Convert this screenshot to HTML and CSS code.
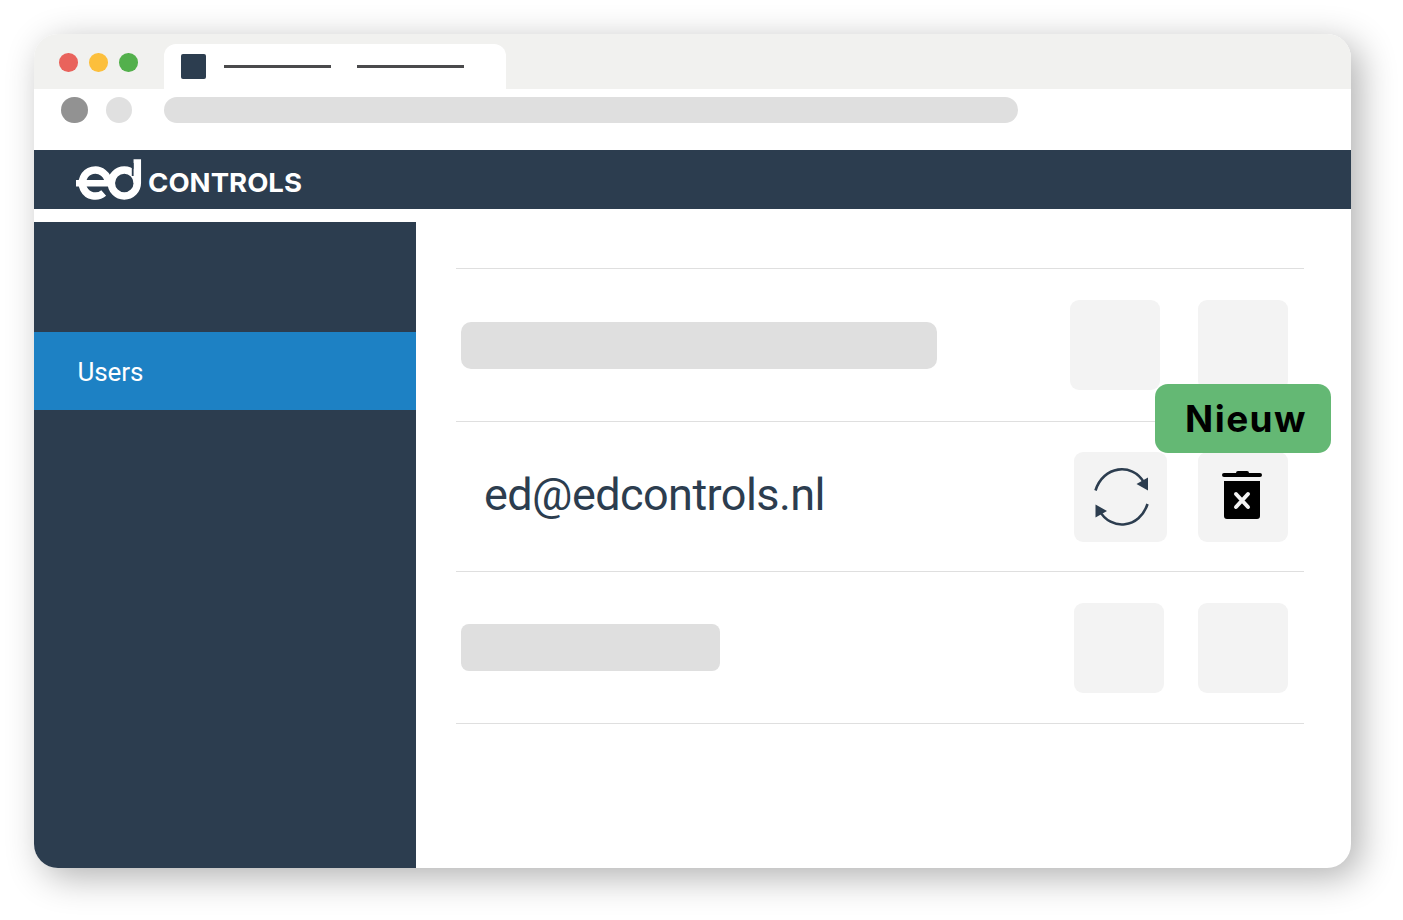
FILE: index.html
```html
<!DOCTYPE html>
<html lang="nl">
<head>
  <meta charset="UTF-8" />
  <meta name="viewport" content="width=device-width, initial-scale=1.0" />
  <title>Ed Controls - Users</title>
  <link rel="stylesheet" href="styles.css">
</head>
<body>
  <div class="browser">
    <div class="tab-bar">
      <div class="window-buttons">
        <span class="dot red"></span>
        <span class="dot yellow"></span>
        <span class="dot green"></span>
      </div>
      <div class="tab">
        <span class="favicon"></span>
        <span class="tab-line"></span>
        <span class="tab-line"></span>
      </div>
    </div>

    <div class="address-bar">
      <span class="nav-dot dark"></span>
      <span class="nav-dot"></span>
      <span class="url"></span>
    </div>

    <header class="app-header">
      <svg class="logo" width="230" height="44" viewBox="0 0 230 44">
        <g fill="none" stroke="#fff" stroke-width="7.500">
          <path d="M0 25.300H35" stroke-width="6.500" />
          <path d="M32.300 25A13 13 0 1 0 27.700 35" />
          <circle cx="48.300" cy="25" r="13" />
          <path d="M61.300 25V1.300" />
          <path d="M56.700 5V18" stroke="#2c3d4f" stroke-width="1.800" />
        </g>
        <text class="logo-text" x="72" y="34" textLength="154" lengthAdjust="spacingAndGlyphs">CONTROLS</text>
      </svg>
    </header>

    <div class="app-body">
      <nav class="sidebar">
        <a class="nav-item">Users</a>
      </nav>

      <main class="content">
        <div class="row row-first">
          <span class="placeholder wide"></span>
          <span class="tile"></span>
          <span class="tile"></span>
        </div>
        <div class="row row-user">
          <span class="email">ed@edcontrols.nl</span>
          <span class="tile tile-refresh">
            <svg width="56" height="60" viewBox="0 0 56 60">
              <g fill="none" stroke="#2c3d4f" stroke-width="2.600">
                <path d="M2.500 23.500C10 -1 39 -5 51 15.500" />
                <path d="M54.500 37C47 61 18 65 6 43" />
              </g>
              <path d="M43.500 17L55 10.500V23.500ZM2.500 37.500V50.500L14 44Z" fill="#2c3d4f" />
            </svg>
          </span>
          <span class="tile tile-delete">
            <svg width="40" height="48" viewBox="0 0 40 48">
              <path d="M2 2H14Q14 0 16 0H25Q27 0 27 2H38Q40 2 40 4T38 6H2Q0 6 0 4T2 2ZM2 10H38V45Q38 48 35 48H5Q2 48 2 45Z" />
              <path d="M14 23L26 36M26 23L14 36" stroke="#f3f3f3" stroke-width="4" stroke-linecap="round" />
            </svg>
          </span>
          <span class="badge">Nieuw</span>
        </div>
        <div class="row row-last">
          <span class="placeholder"></span>
          <span class="tile"></span>
          <span class="tile"></span>
        </div>
      </main>
    </div>
  </div>
</body>
</html>
```
FILE: styles.css
```css
* {
  box-sizing: border-box;
}

body {
  margin: 0;
  padding: 34px;
  height: 920px;
  background: #fff;
  font-family: Roboto, sans-serif;
  overflow: hidden;
}

.browser {
  display: flex;
  flex-direction: column;
  width: 1317px;
  height: 834px;
  background: #fff;
  border-radius: 24px;
  box-shadow: 9px 9px 36px rgba(0, 0, 0, 0.31);
  overflow: hidden;
}

/* browser chrome */
.tab-bar {
  display: flex;
  height: 55px;
  padding-top: 10px;
  background: #f1f1ef;
}

.window-buttons {
  display: flex;
  gap: 11.600px;
  width: 130px;
  padding: 9px 0 0 25px;
}

.dot {
  width: 18.600px;
  height: 18.600px;
  border-radius: 50%;
}

.red { background: #e9635c; }
.yellow { background: #fcbf3c; }
.green { background: #53b04c; }

.tab {
  display: flex;
  align-items: center;
  width: 342px;
  padding-left: 17px;
  background: #fff;
  border-radius: 12px 12px 0 0;
}

.favicon {
  width: 25px;
  height: 25px;
  margin-right: -8px;
  background: #2c3d4f;
  border-radius: 2px;
}

.tab-line {
  width: 106.500px;
  height: 2.500px;
  margin-left: 26.300px;
  background: #4a4a4c;
}

.address-bar {
  display: flex;
  gap: 18px;
  height: 61px;
  padding: 7.500px 0 0 27px;
}

.nav-dot {
  width: 26.500px;
  height: 26.500px;
  background: #e0e0e0;
  border-radius: 50%;
}

.nav-dot.dark {
  background: #929292;
}

.url {
  width: 854px;
  height: 26.500px;
  margin-left: 14px;
  background: #dfdfdf;
  border-radius: 14px;
}

/* app */
.app-header {
  height: 59px;
  padding: 8px 0 0 42px;
  background: #2c3d4f;
}

.logo {
  display: block;
}

.logo-text {
  fill: #fff;
  font-family: Inter, sans-serif;
  font-size: 26px;
  font-weight: 700;
}

.app-body {
  display: flex;
  flex: 1;
  margin-top: 13px;
}

.sidebar {
  width: 382px;
  padding-top: 110px;
  background: #2c3d4f;
}

.nav-item {
  display: flex;
  align-items: center;
  height: 78px;
  padding: 2px 0 0 43.500px;
  background: #1d81c4;
  color: #fff;
  font-size: 26px;
  letter-spacing: -0.1px;
}

.content {
  width: 888px;
  padding: 46px 0 0 40px;
}

.row {
  position: relative;
  display: flex;
  align-items: center;
  height: 150px;
  padding: 0 16px 0 5px;
  border-top: 1px solid #dfdfdf;
}

.row-first {
  height: 153px;
}

.row-last {
  height: 153px;
  border-bottom: 1px solid #dfdfdf;
}

.placeholder {
  width: 259px;
  height: 47px;
  margin-right: auto;
  background: #dfdfdf;
  border-radius: 8px;
}

.placeholder.wide {
  width: 476px;
  border-radius: 10px;
}

.tile {
  display: flex;
  align-items: center;
  justify-content: center;
  width: 90px;
  height: 90px;
  margin-left: 34px;
  background: #f3f3f3;
  border-radius: 9px;
}

.row-first .tile {
  margin-left: 38px;
}

.tile-refresh {
  width: 93px;
  margin-right: -3px;
}

.tile-delete {
  padding: 0 3px 3px 0;
}

.email {
  margin: -5px auto 0 23px;
  color: #2c3d4f;
  font-size: 45px;
  letter-spacing: -0.57px;
}

.badge {
  position: absolute;
  top: -38px;
  right: -27px;
  width: 176px;
  height: 69px;
  padding-left: 6px;
  background: #64b874;
  border-radius: 13px;
  color: #000;
  font-family: Inter, sans-serif;
  font-size: 37px;
  font-weight: 700;
  letter-spacing: 1.4px;
  line-height: 69px;
  text-align: center;
}
```
